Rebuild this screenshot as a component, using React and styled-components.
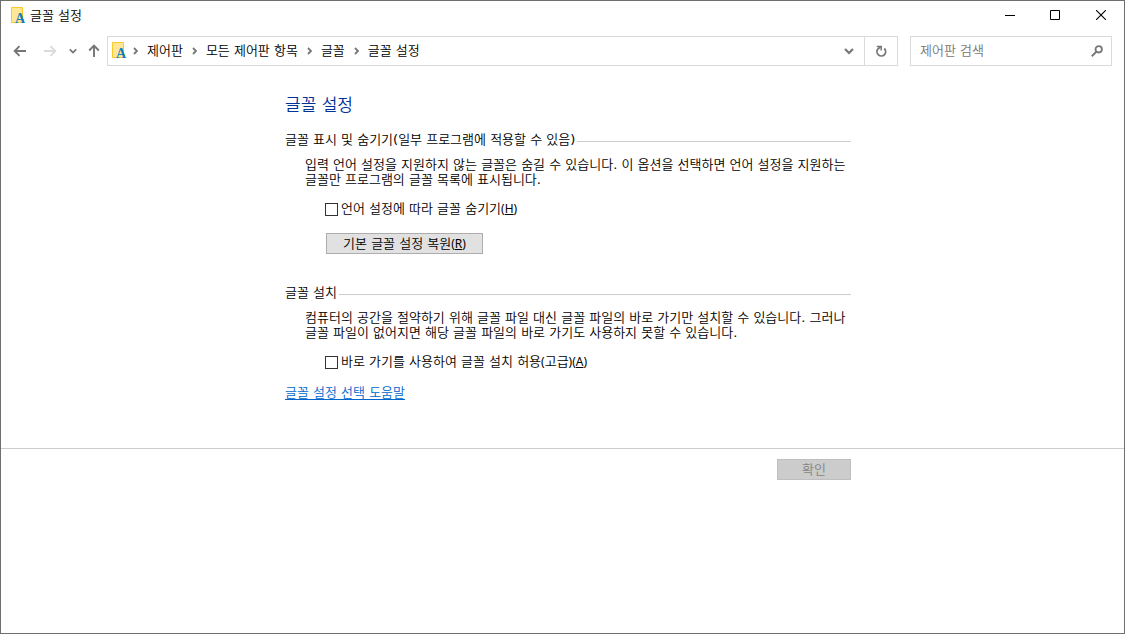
import React, { useState } from 'react';
import styled, { createGlobalStyle } from 'styled-components';

const CRUMBS = ['제어판', '모든 제어판 항목', '글꼴', '글꼴 설정'];

const FontFolderIcon = () => (
  <svg width="16" height="20" viewBox="0 0 16 20" aria-hidden="true">
    <path d="M.5 1.5h11v15H.5z" fill="#ffe797" stroke="#fac929" />
    <path d="M11 13h2v4h-2z" fill="#fac929" />
    <text
      x="9"
      y="17"
      textAnchor="middle"
      fontFamily="'Liberation Serif', serif"
      fontWeight="700"
      fontSize="14"
      fill="#0f7fc4"
    >
      A
    </text>
  </svg>
);

const ArrowIcon = ({ turn = 0 }) => (
  <svg width="14" height="14" viewBox="0 0 14 14" aria-hidden="true">
    <path
      d="M13 7H2M6.5 2.2 1.7 7l4.8 4.8"
      transform={`rotate(${turn} 7 7)`}
      fill="none"
      stroke="currentColor"
      strokeWidth="1.9"
    />
  </svg>
);

const DownIcon = ({ size = 10 }) => (
  <svg width={size} height={size} viewBox="0 0 10 10" aria-hidden="true">
    <path d="M1 3l4 4 4-4" fill="none" stroke="currentColor" strokeWidth="2.2" />
  </svg>
);

const CrumbIcon = () => (
  <svg width="5" height="8" viewBox="0 0 5 8" aria-hidden="true">
    <path d="M1 1l3 3-3 3" fill="none" stroke="#767676" strokeWidth="1.8" />
  </svg>
);

const RefreshIcon = () => (
  <svg width="12" height="12" viewBox="0 0 12 12" aria-hidden="true">
    <path
      d="M9.2 3.5A4.3 4.3 0 1 1 3 3.9L5.4 2"
      fill="none"
      stroke="currentColor"
      strokeWidth="1.8"
    />
    <path d="M1.8 1.4h4.4v4.2" fill="none" stroke="currentColor" strokeWidth="1.5" />
  </svg>
);

const SearchIcon = () => (
  <svg width="12" height="12" viewBox="0 0 12 12" aria-hidden="true">
    <circle cx="7.7" cy="4.3" r="3.2" fill="none" stroke="#767676" strokeWidth="1.8" />
    <path d="M5.4 6.6.8 11.2" stroke="#767676" strokeWidth="2" />
  </svg>
);

const AccessKey = ({ letter }) => (
  <KeyHint>
    (<u>{letter}</u>)
  </KeyHint>
);

const TitleBar = () => (
  <Caption>
    <FontFolderIcon />
    <CaptionText>글꼴 설정</CaptionText>
    <CaptionButton aria-label="최소화">
      <svg width="12" height="10" viewBox="0 0 12 10">
        <path d="M2 5.5h10" stroke="#000" />
      </svg>
    </CaptionButton>
    <CaptionButton aria-label="최대화">
      <svg width="10" height="10" viewBox="0 0 10 10">
        <path d="M.5.5h9v9h-9z" fill="none" stroke="#000" />
      </svg>
    </CaptionButton>
    <CaptionButton aria-label="닫기">
      <svg width="10" height="10" viewBox="0 0 10 10">
        <path d="M0 0l10 10M10 0L0 10" stroke="#000" strokeWidth="1.1" />
      </svg>
    </CaptionButton>
  </Caption>
);

const NavigationBar = () => (
  <Navigation>
    <NavButton $width={30} aria-label="뒤로">
      <ArrowIcon />
    </NavButton>
    <NavButton $width={30} aria-label="앞으로" disabled>
      <ArrowIcon turn={180} />
    </NavButton>
    <NavButton $width={16} aria-label="최근 위치">
      <DownIcon size={8} />
    </NavButton>
    <NavButton $width={26} aria-label="위로">
      <ArrowIcon turn={90} />
    </NavButton>
    <AddressBar>
      <FontFolderIcon />
      <Crumbs>
        {CRUMBS.map((name) => (
          <Crumb key={name}>
            <CrumbIcon />
            <CrumbLink href="#">{name}</CrumbLink>
          </Crumb>
        ))}
      </Crumbs>
      <NavButton $width={30} aria-label="이전 위치">
        <DownIcon />
      </NavButton>
      <RefreshButton $width={33} aria-label="새로 고침">
        <RefreshIcon />
      </RefreshButton>
    </AddressBar>
    <SearchBox>
      <SearchInput type="text" placeholder="제어판 검색" aria-label="제어판 검색" />
      <SearchIcon />
    </SearchBox>
  </Navigation>
);

const App = () => {
  const [hideFonts, setHideFonts] = useState(false);
  const [allowShortcut, setAllowShortcut] = useState(false);

  return (
    <Window>
      <GlobalStyle />
      <TitleBar />
      <NavigationBar />
      <Content>
        <PageTitle>글꼴 설정</PageTitle>

        <Group>
          <GroupTitle>글꼴 표시 및 숨기기(일부 프로그램에 적용할 수 있음)</GroupTitle>
          <Description>
            입력 언어 설정을 지원하지 않는 글꼴은 숨길 수 있습니다. 이 옵션을 선택하면 언어 설정을
            지원하는 글꼴만 프로그램의 글꼴 목록에 표시됩니다.
          </Description>
          <Option>
            <CheckBox
              type="checkbox"
              checked={hideFonts}
              onChange={(e) => setHideFonts(e.target.checked)}
            />
            <span>
              언어 설정에 따라 글꼴 숨기기
              <AccessKey letter="H" />
            </span>
          </Option>
          <RestoreButton>
            기본 글꼴 설정 복원
            <AccessKey letter="R" />
          </RestoreButton>
        </Group>

        <Group>
          <GroupTitle>글꼴 설치</GroupTitle>
          <Description>
            컴퓨터의 공간을 절약하기 위해 글꼴 파일 대신 글꼴 파일의 바로 가기만 설치할 수 있습니다.
            그러나 글꼴 파일이 없어지면 해당 글꼴 파일의 바로 가기도 사용하지 못할 수 있습니다.
          </Description>
          <Option>
            <CheckBox
              type="checkbox"
              checked={allowShortcut}
              onChange={(e) => setAllowShortcut(e.target.checked)}
            />
            <span>
              바로 가기를 사용하여 글꼴 설치 허용<KeyHint>(</KeyHint>고급<KeyHint>)</KeyHint>
              <AccessKey letter="A" />
            </span>
          </Option>
        </Group>

        <HelpLink href="#">글꼴 설정 선택 도움말</HelpLink>
      </Content>
      <Footer>
        <FooterInner>
          <OkButton disabled>확인</OkButton>
        </FooterInner>
      </Footer>
    </Window>
  );
};

export default App;

const GlobalStyle = createGlobalStyle`
  * {
    box-sizing: border-box;
  }

  body {
    margin: 0;
    background-color: #fff;
    color: #000;
    font-family: 'DejaVu Sans', 'Noto Sans CJK KR DemiLight', 'Noto Sans CJK KR', sans-serif;
    font-size: 13px;
    line-height: 15px;
    word-break: keep-all;
  }

  button, input {
    font: inherit;
    color: inherit;
  }

  svg {
    display: block;
    flex: none;
  }
`;

const Window = styled.div`
  min-height: 100vh;
  border: 1px solid #6e6e6e;
`;

const Caption = styled.header`
  display: flex;
  align-items: center;
  height: 30px;
  padding-left: 10px;
`;

const CaptionText = styled.span`
  flex: 1;
  padding: 0 0 1px 3px;
`;

const CaptionButton = styled.button`
  display: flex;
  align-items: center;
  align-self: flex-start;
  justify-content: center;

  width: 46px;
  height: 28px;
  padding: 0;
  border: none;
  background: none;
`;

const Navigation = styled.nav`
  display: flex;
  align-items: center;
  padding: 5px 12px 0 4px;
`;

const NavButton = styled.button`
  display: flex;
  align-items: center;
  justify-content: center;
  flex: none;

  width: ${({ $width }) => $width}px;
  height: 28px;
  padding: 0;
  border: none;
  background: none;
  color: #767676;

  &:disabled {
    color: #dadada;
  }
`;

const AddressBar = styled.div`
  display: flex;
  align-items: center;
  flex: 1;

  height: 30px;
  padding-left: 4px;
  border: 1px solid #d9d9d9;
`;

const Crumbs = styled.ol`
  display: flex;
  flex: 1;
  gap: 9px;

  margin: 0;
  padding: 0 0 0 5px;
  list-style: none;
`;

const Crumb = styled.li`
  display: flex;
  align-items: center;
  gap: 9px;
  white-space: nowrap;
`;

const CrumbLink = styled.a`
  padding-bottom: 2px;
  color: #000;
  text-decoration: none;
`;

const RefreshButton = styled(NavButton)`
  border-left: 1px solid #d9d9d9;
`;

const SearchBox = styled.div`
  display: flex;
  align-items: center;

  width: 202px;
  height: 30px;
  margin-left: 12px;
  padding: 0 8px 0 9px;
  border: 1px solid #d9d9d9;
`;

const SearchInput = styled.input`
  flex: 1;
  min-width: 0;
  padding: 0 0 2px;
  border: none;
  outline: none;
  background: none;

  &::placeholder {
    color: #767676;
    opacity: 1;
  }
`;

const Content = styled.main`
  max-width: 577px;
  margin: 0 auto;
  padding: 29px 0 48px 11px;
`;

const PageTitle = styled.h1`
  margin: 0 0 17px;
  color: #003399;
  font-size: 17px;
  font-weight: 400;
  line-height: 20px;
`;

const Group = styled.section`
  & + & {
    margin-top: 31px;
  }
`;

const GroupTitle = styled.h2`
  display: flex;
  align-items: center;
  gap: 2px;

  margin: 0;
  font-size: 13px;
  font-weight: 400;

  &::after {
    content: '';
    flex: 1;
    height: 1px;
    margin-top: 4px;
    background-color: #cccccc;
  }
`;

const Description = styled.p`
  margin: 10px 0 14px;
  padding-left: 20px;
`;

const Option = styled.label`
  display: flex;
  align-items: flex-end;
  gap: 3px;
  width: fit-content;
  margin-left: 40px;
`;

const CheckBox = styled.input`
  appearance: none;
  width: 13px;
  height: 13px;
  margin: 0;
  border: 1px solid #333333;
  background-color: #fff;

  &:checked {
    box-shadow: inset 0 0 0 2px #fff;
    background-color: #333333;
  }
`;

const KeyHint = styled.span`
  font-family: 'Noto Sans', sans-serif;
  font-size: 12px;
`;

const RestoreButton = styled.button`
  display: block;
  width: 157px;
  height: 21px;
  margin: 17px 0 0 41px;
  padding: 0;
  border: 1px solid #adadad;
  background-color: #e1e1e1;
`;

const HelpLink = styled.a`
  display: block;
  width: fit-content;
  margin-top: 16px;
  color: #0066cc;
  text-underline-offset: 2px;
`;

const Footer = styled.footer`
  border-top: 1px solid #cccccc;
`;

const FooterInner = styled.div`
  display: flex;
  justify-content: flex-end;
  max-width: 577px;
  margin: 0 auto;
  padding-top: 10px;
`;

const OkButton = styled.button`
  width: 74px;
  height: 21px;
  padding: 0;
  border: 1px solid #bfbfbf;
  background-color: #cccccc;
  color: #838383;
`;
